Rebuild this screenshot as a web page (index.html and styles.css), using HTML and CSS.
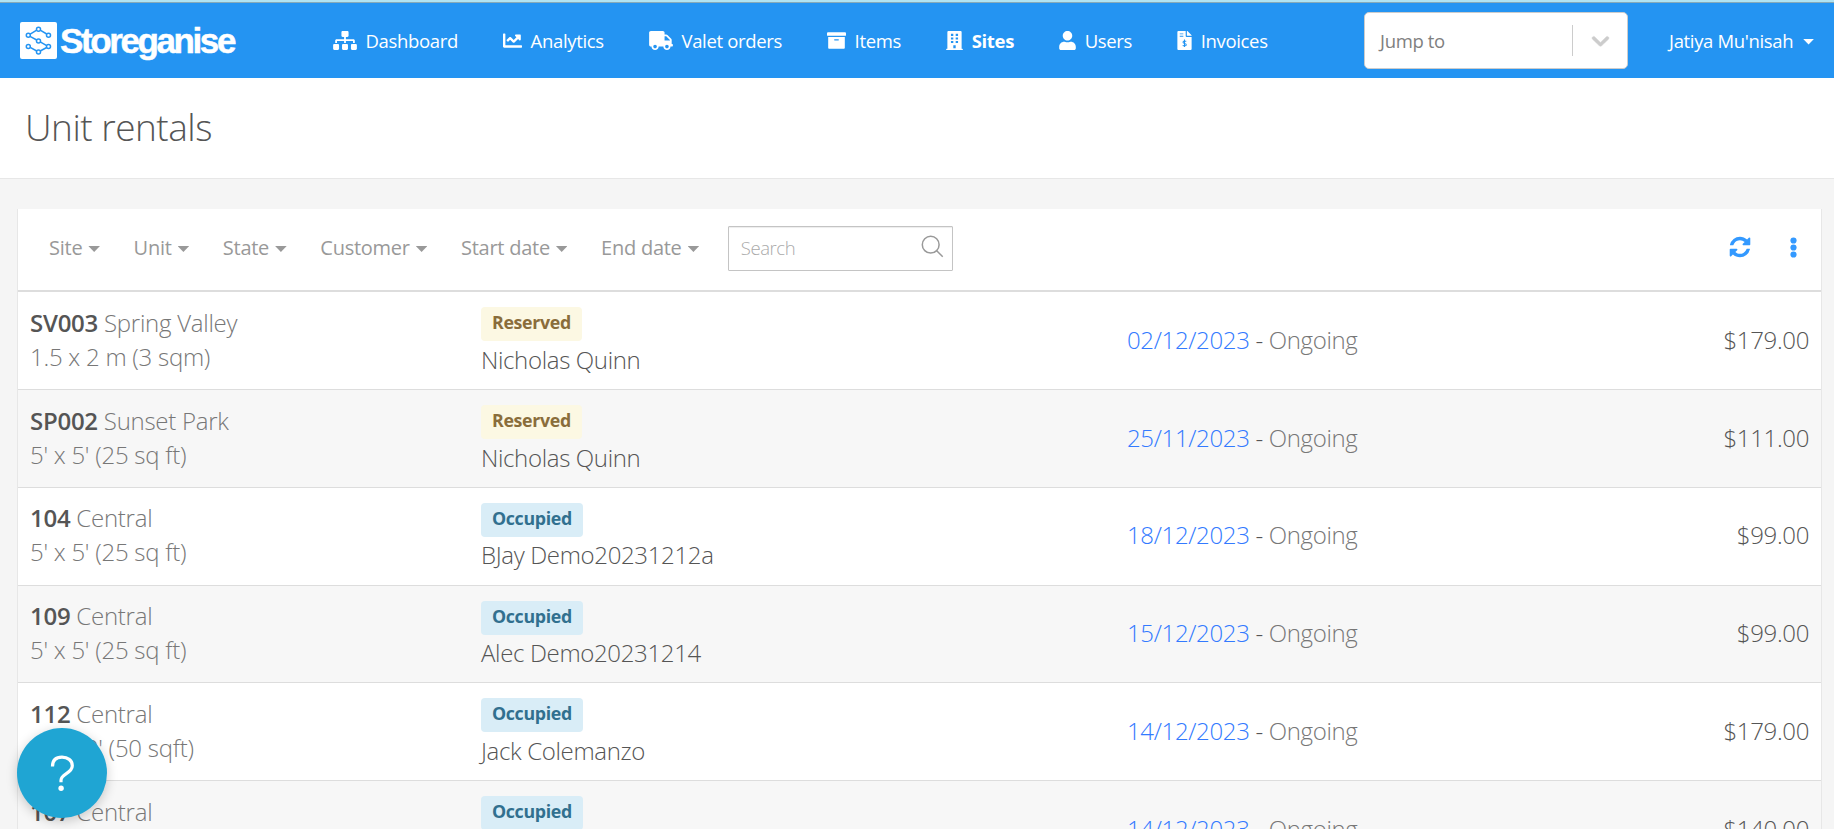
FILE: index.html
```html
<!DOCTYPE html>
<html lang="en">
<head>
<meta charset="utf-8">
<title>Unit rentals - Storeganise</title>
<link rel="stylesheet" href="styles.css">
</head>
<body>
<header class="navbar">
  <a class="brand">
    <svg class="brand-mark" viewBox="0 0 37 37">
      <rect width="37" height="37" rx="2" fill="#fff"/>
      <g fill="none" stroke="#2494f2" stroke-width="1.5">
        <path d="M10.2 12.2 16.7 8.2M20.2 8.2 26.7 12M10 14.3 16.7 18M20.2 19.8 26.7 23.6M10.2 25.3 16.7 29M20.2 29 26.7 25.5"/>
        <circle cx="18.5" cy="7.2" r="2"/><circle cx="8.3" cy="13.2" r="2"/><circle cx="28.5" cy="13.2" r="2"/>
        <circle cx="18.5" cy="18.9" r="2"/><circle cx="8.3" cy="24.4" r="2"/><circle cx="28.5" cy="24.4" r="2"/><circle cx="18.5" cy="30.1" r="2"/>
      </g>
    </svg>
    <span class="brand-name">Storeganise</span>
  </a>
  <nav class="menu">
    <a class="menu-item"><svg class="icon wide" viewBox="0 0 640 512"><path d="M128 352H32c-17.67 0-32 14.33-32 32v96c0 17.67 14.33 32 32 32h96c17.67 0 32-14.33 32-32v-96c0-17.67-14.33-32-32-32zm-24-80h192v48h48v-48h192v48h48v-57.59c0-21.17-17.23-38.41-38.41-38.41H344v-64h40c17.67 0 32-14.33 32-32V32c0-17.67-14.33-32-32-32H256c-17.67 0-32 14.33-32 32v96c0 17.67 14.33 32 32 32h40v64H94.41C73.23 224 56 241.23 56 262.41V320h48v-48zm264 80h-96c-17.67 0-32 14.33-32 32v96c0 17.67 14.33 32 32 32h96c17.67 0 32-14.33 32-32v-96c0-17.67-14.33-32-32-32zm240 0h-96c-17.67 0-32 14.33-32 32v96c0 17.67 14.33 32 32 32h96c17.67 0 32-14.33 32-32v-96c0-17.67-14.33-32-32-32z"/></svg>Dashboard</a>
    <a class="menu-item"><svg class="icon" viewBox="0 0 512 512"><path d="M496 384H64V80c0-8.84-7.16-16-16-16H16C7.16 64 0 71.16 0 80v336c0 17.67 14.33 32 32 32h464c8.84 0 16-7.16 16-16v-32c0-8.84-7.16-16-16-16zM464 96H345.94c-21.38 0-32.09 25.85-16.97 40.97l32.4 32.4L288 242.75l-73.37-73.37c-12.5-12.5-32.76-12.5-45.25 0l-68.69 68.69c-6.25 6.25-6.25 16.38 0 22.63l22.62 22.62c6.25 6.25 16.38 6.25 22.63 0L192 237.25l73.37 73.37c12.5 12.5 32.76 12.5 45.25 0l96-96 32.4 32.4c15.12 15.12 40.97 4.41 40.97-16.97V112c.01-8.84-7.15-16-15.99-16z"/></svg>Analytics</a>
    <a class="menu-item"><svg class="icon wide" viewBox="0 0 640 512"><path d="M624 352h-16V243.9c0-12.7-5.1-24.9-14.1-33.9L494 110.1c-9-9-21.2-14.1-33.9-14.1H416V48c0-26.5-21.5-48-48-48H48C21.5 0 0 21.5 0 48v320c0 26.5 21.5 48 48 48h16c0 53 43 96 96 96s96-43 96-96h128c0 53 43 96 96 96s96-43 96-96h48c8.8 0 16-7.2 16-16v-32c0-8.8-7.2-16-16-16zM160 464c-26.5 0-48-21.5-48-48s21.5-48 48-48 48 21.5 48 48-21.5 48-48 48zm320 0c-26.5 0-48-21.5-48-48s21.5-48 48-48 48 21.5 48 48-21.5 48-48 48zm80-208H416V144h44.1l99.9 99.9V256z"/></svg>Valet orders</a>
    <a class="menu-item"><svg class="icon" viewBox="0 0 512 512"><path d="M32 448c0 17.7 14.3 32 32 32h384c17.7 0 32-14.3 32-32V160H32v288zm160-212c0-6.6 5.4-12 12-12h104c6.6 0 12 5.4 12 12v8c0 6.6-5.4 12-12 12H204c-6.6 0-12-5.4-12-12v-8zM480 32H32C14.3 32 0 46.3 0 64v48c0 8.8 7.2 16 16 16h480c8.8 0 16-7.2 16-16V64c0-17.7-14.3-32-32-32z"/></svg>Items</a>
    <a class="menu-item active"><svg class="icon narrow" viewBox="0 0 448 512"><path fill-rule="evenodd" d="M436 480h-20V24c0-13.3-10.7-24-24-24H56C42.7 0 32 10.7 32 24v456H12c-6.6 0-12 5.4-12 12v20h448v-20c0-6.6-5.4-12-12-12zM128 76h64v56h-64zM256 76h64v56h-64zM128 172h64v56h-64zM256 172h64v56h-64zM128 268h64v56h-64zM256 268h64v56h-64zM192 384h64v80h-64z"/></svg>Sites</a>
    <a class="menu-item"><svg class="icon narrow" viewBox="0 0 448 512"><path d="M224 256c70.7 0 128-57.3 128-128S294.7 0 224 0 96 57.3 96 128s57.3 128 128 128zm89.6 32h-16.7c-22.2 10.2-46.9 16-72.9 16s-50.6-5.8-72.9-16h-16.7C60.2 288 0 348.2 0 422.4V464c0 26.5 21.5 48 48 48h352c26.5 0 48-21.5 48-48v-41.6c0-74.2-60.2-134.4-134.4-134.4z"/></svg>Users</a>
    <a class="menu-item"><svg class="icon slim" viewBox="0 0 384 512"><path fill-rule="evenodd" d="M377 105 279.1 7c-4.5-4.5-10.6-7-17-7H256v128h128v-6.1c0-6.3-2.5-12.4-7-16.9zM224 136V0H24C10.7 0 0 10.7 0 24v464c0 13.3 10.7 24 24 24h336c13.3 0 24-10.7 24-24V160H248c-13.2 0-24-10.8-24-24zM64 64h96v24H64zM64 128h96v24H64z"/><path d="M240 278c-14-14-88-20-88 22 0 44 88 24 88 68 0 42-80 36-96 18M192 232v200" fill="none" stroke="#2494f2" stroke-width="28"/></svg>Invoices</a>
  </nav>
  <div class="jump"><span class="jump-label">Jump to</span><span class="jump-arrow"><svg width="29" height="29" viewBox="0 0 20 20"><path fill="#ccc" stroke="#ccc" stroke-width=".3" d="M4.516 7.548c0.436-0.446 1.043-0.481 1.576 0l3.908 3.747 3.908-3.747c0.533-0.481 1.141-0.446 1.574 0 0.436 0.445 0.408 1.197 0 1.615-0.406 0.418-4.695 4.502-4.695 4.502-0.217 0.223-0.502 0.335-0.787 0.335s-0.570-0.112-0.789-0.335c0 0-4.287-4.084-4.695-4.502s-0.436-1.170 0-1.615z"/></svg></span></div>
  <a class="account">Jatiya Mu'nisah<i class="caret"></i></a>
</header>
<section class="page-head"><h1>Unit rentals</h1></section>
<main class="panel">
  <div class="toolbar">
    <div class="filters">
      <a>Site<i class="caret"></i></a><a>Unit<i class="caret"></i></a><a>State<i class="caret"></i></a><a>Customer<i class="caret"></i></a><a>Start date<i class="caret"></i></a><a>End date<i class="caret"></i></a>
    </div>
    <div class="search"><span>Search</span><svg width="23" height="23" viewBox="0 0 23 23" fill="none" stroke="#999" stroke-width="1.5"><circle cx="9.7" cy="9.7" r="8.4"/><path d="m15.7 15.7 6 6"/></svg></div>
    <div class="actions">
      <svg width="24" height="24" viewBox="0 0 1792 1792" fill="#3399ff"><path d="M1639 1056q0 5-1 7-64 268-268 434.500t-478 166.500q-146 0-282.500-55t-243.500-157l-129 129q-19 19-45 19t-45-19-19-45v-448q0-26 19-45t45-19h448q26 0 45 19t19 45-19 45l-137 137q71 66 161 102t187 36q134 0 250-65t186-179q11-17 53-117 8-23 30-23h192q13 0 22.500 9.500t9.500 22.500zm25-800v448q0 26-19 45t-45 19h-448q-26 0-45-19t-19-45 19-45l138-138q-148-137-349-137-134 0-250 65t-186 179q-11 17-53 117-8 23-30 23h-199q-13 0-22.500-9.500t-9.500-22.500v-7q65-268 270-434.500t480-166.500q146 0 284 55.500t245 156.500l130-129q19-19 45-19t45 19 19 45z"/></svg>
      <svg width="7" height="21" viewBox="0 0 7 21" fill="#3399ff"><circle cx="3.5" cy="3.5" r="3.1"/><circle cx="3.5" cy="10.500" r="3.1"/><circle cx="3.5" cy="17.500" r="3.1"/></svg>
    </div>
  </div>
  <div class="rows">
    <div class="row"><div class="unit"><b>SV003</b> Spring Valley<br>1.5 x 2 m (3 sqm)</div><div class="customer"><span class="badge reserved">Reserved</span><span>Nicholas Quinn</span></div><div class="dates"><a>02/12/2023</a> - <span>Ongoing</span></div><div class="price">$179.00</div></div>
    <div class="row"><div class="unit"><b>SP002</b> Sunset Park<br>5' x 5' (25 sq ft)</div><div class="customer"><span class="badge reserved">Reserved</span><span>Nicholas Quinn</span></div><div class="dates"><a>25/11/2023</a> - <span>Ongoing</span></div><div class="price">$111.00</div></div>
    <div class="row"><div class="unit"><b>104</b> Central<br>5' x 5' (25 sq ft)</div><div class="customer"><span class="badge occupied">Occupied</span><span>BJay Demo20231212a</span></div><div class="dates"><a>18/12/2023</a> - <span>Ongoing</span></div><div class="price">$99.00</div></div>
    <div class="row"><div class="unit"><b>109</b> Central<br>5' x 5' (25 sq ft)</div><div class="customer"><span class="badge occupied">Occupied</span><span>Alec Demo20231214</span></div><div class="dates"><a>15/12/2023</a> - <span>Ongoing</span></div><div class="price">$99.00</div></div>
    <div class="row"><div class="unit"><b>112</b> Central<br>5' x 10' (50 sqft)</div><div class="customer"><span class="badge occupied">Occupied</span><span>Jack Colemanzo</span></div><div class="dates"><a>14/12/2023</a> - <span>Ongoing</span></div><div class="price">$179.00</div></div>
    <div class="row"><div class="unit"><b>107</b> Central<br>5' x 5' (25 sq ft)</div><div class="customer"><span class="badge occupied">Occupied</span></div><div class="dates"><a>14/12/2023</a> - <span>Ongoing</span></div><div class="price">$140.00</div></div>
  </div>
</main>
<button class="help" aria-label="Help"><svg width="26" height="38" viewBox="0 0 26 38"><path d="M3.500 12.500C3.500 6 7.500 3.200 13 3.200s10.300 3 10.300 8.500c0 7.800-11.300 7.800-11.300 14.500v2" fill="none" stroke="#fff" stroke-width="3.2"/><circle cx="12.100" cy="34.200" r="2.700" fill="#fff"/></svg></button>
</body>
</html>
```
FILE: styles.css
```css
* { box-sizing: border-box; }
html, body { height: 829px; overflow: hidden; }
body {
  margin: 0;
  background: #f5f5f5;
  color: #555;
  font: 300 24px/34px "Open Sans", "Noto Sans", sans-serif;
  letter-spacing: -.34px;
}

/* Top bar */
.navbar {
  display: flex;
  align-items: center;
  height: 78px;
  padding: 3px 0 0 20px;
  background: linear-gradient(#b0e3f2 2px, #86aab8 2px 3px, #2494f2 3px);
  color: #fff;
  font-size: 18.5px;
  font-weight: 400;
  line-height: 26px;
}
.brand { display: flex; align-items: center; width: 313px; }
.brand-mark { width: 37px; height: 37px; margin-right: 3px; }
.brand-name {
  font: 700 35px/38px "Liberation Sans", Arial, sans-serif;
  letter-spacing: -2.4px;
  -webkit-text-stroke: .5px #fff;
}
.menu { display: flex; width: 1031px; gap: 45.2px; }
.menu-item { display: flex; align-items: center; white-space: nowrap; }
.menu-item.active { font-weight: 700; }
.icon { width: 19px; height: 19px; margin-right: 8.5px; fill: currentColor; }
.icon.wide { width: 24px; }
.icon.narrow { width: 17px; }
.icon.slim { width: 15px; }
.jump {
  display: flex;
  align-items: center;
  width: 264px;
  height: 57px;
  padding-left: 15px;
  border: 1px solid #ccc;
  border-radius: 5px;
  background: #fff;
  color: #808080;
}
.jump-label { flex: 1; }
.jump-arrow {
  display: flex;
  align-items: center;
  justify-content: center;
  width: 55px;
  height: 31px;
  border-left: 1px solid #ccc;
}
.account { margin-left: 41px; white-space: nowrap; }
.caret {
  display: inline-block;
  width: 11.6px;
  height: 6px;
  margin-left: 9.5px;
  background: currentColor;
  clip-path: polygon(0 0, 100% 0, 50% 100%);
  vertical-align: 3px;
}

/* Title */
.page-head {
  display: flex;
  align-items: center;
  height: 101px;
  padding: 0 0 2px 25px;
  border-bottom: 1px solid #e7e7e7;
  background: #fff;
}
h1 { margin: 0; font-size: 37px; line-height: 50px; font-weight: 300; letter-spacing: -.5px; }

/* List */
.panel {
  margin: 30px 12px 0 17px;
  border: solid #e7e7e7;
  border-width: 0 1px;
  background: #fff;
}
.toolbar {
  display: flex;
  align-items: center;
  height: 83.2px;
  padding: 0 24px 3px 31px;
  border-bottom: 2px solid #ddd;
  color: #999;
  font-size: 20px;
  font-weight: 400;
  letter-spacing: -.25px;
}
.filters { display: flex; gap: 33.6px; white-space: nowrap; }
.filters .caret { margin-left: 6px; }
.search {
  display: flex;
  align-items: center;
  justify-content: space-between;
  width: 225px;
  height: 45px;
  margin-left: 28.5px;
  padding: 0 8px 0 12px;
  border: 1px solid #c4c4c4;
  border-radius: 1px;
  box-shadow: inset 0 1px 1px rgba(0, 0, 0, .075);
  color: #aaa;
  font-size: 18.5px;
  font-weight: 300;
  letter-spacing: -.4px;
}
.search svg { margin-bottom: 3px; }
.actions { display: flex; align-items: center; gap: 38px; margin: 0 0 2px auto; }
.row {
  display: grid;
  grid-template-columns: 451px 646px 1fr auto;
  align-items: center;
  height: 97.8px;
  padding: 0 12px 1.4px;
  border-bottom: 1px solid #ddd;
}
.row:nth-child(even) { background: #f7f7f7; }
.unit { letter-spacing: -.26px; }
.unit, .dates span { color: #777; }
.unit b { color: #555; font-weight: 600; }
.customer { display: flex; flex-direction: column; align-items: flex-start; align-self: start; padding-top: 15px; }
.badge {
  height: 34px;
  margin-bottom: 1.6px;
  padding: 0 11px;
  border-radius: 4px;
  font-size: 17.8px;
  font-weight: 700;
  line-height: 31px;
}
.badge.reserved { background: #fcf8e3; color: #8a6d3b; }
.badge.occupied { background: #d9edf7; color: #31708f; }
.dates a { color: #337aff; }

/* Floating help button */
.help {
  position: fixed;
  left: 17px;
  bottom: 11px;
  display: flex;
  align-items: center;
  justify-content: center;
  width: 90px;
  height: 90px;
  padding: 0;
  border: 0;
  border-radius: 50%;
  background: #1fa5d3;
  box-shadow: 0 3px 12px rgba(0, 0, 0, .2);
}
```
